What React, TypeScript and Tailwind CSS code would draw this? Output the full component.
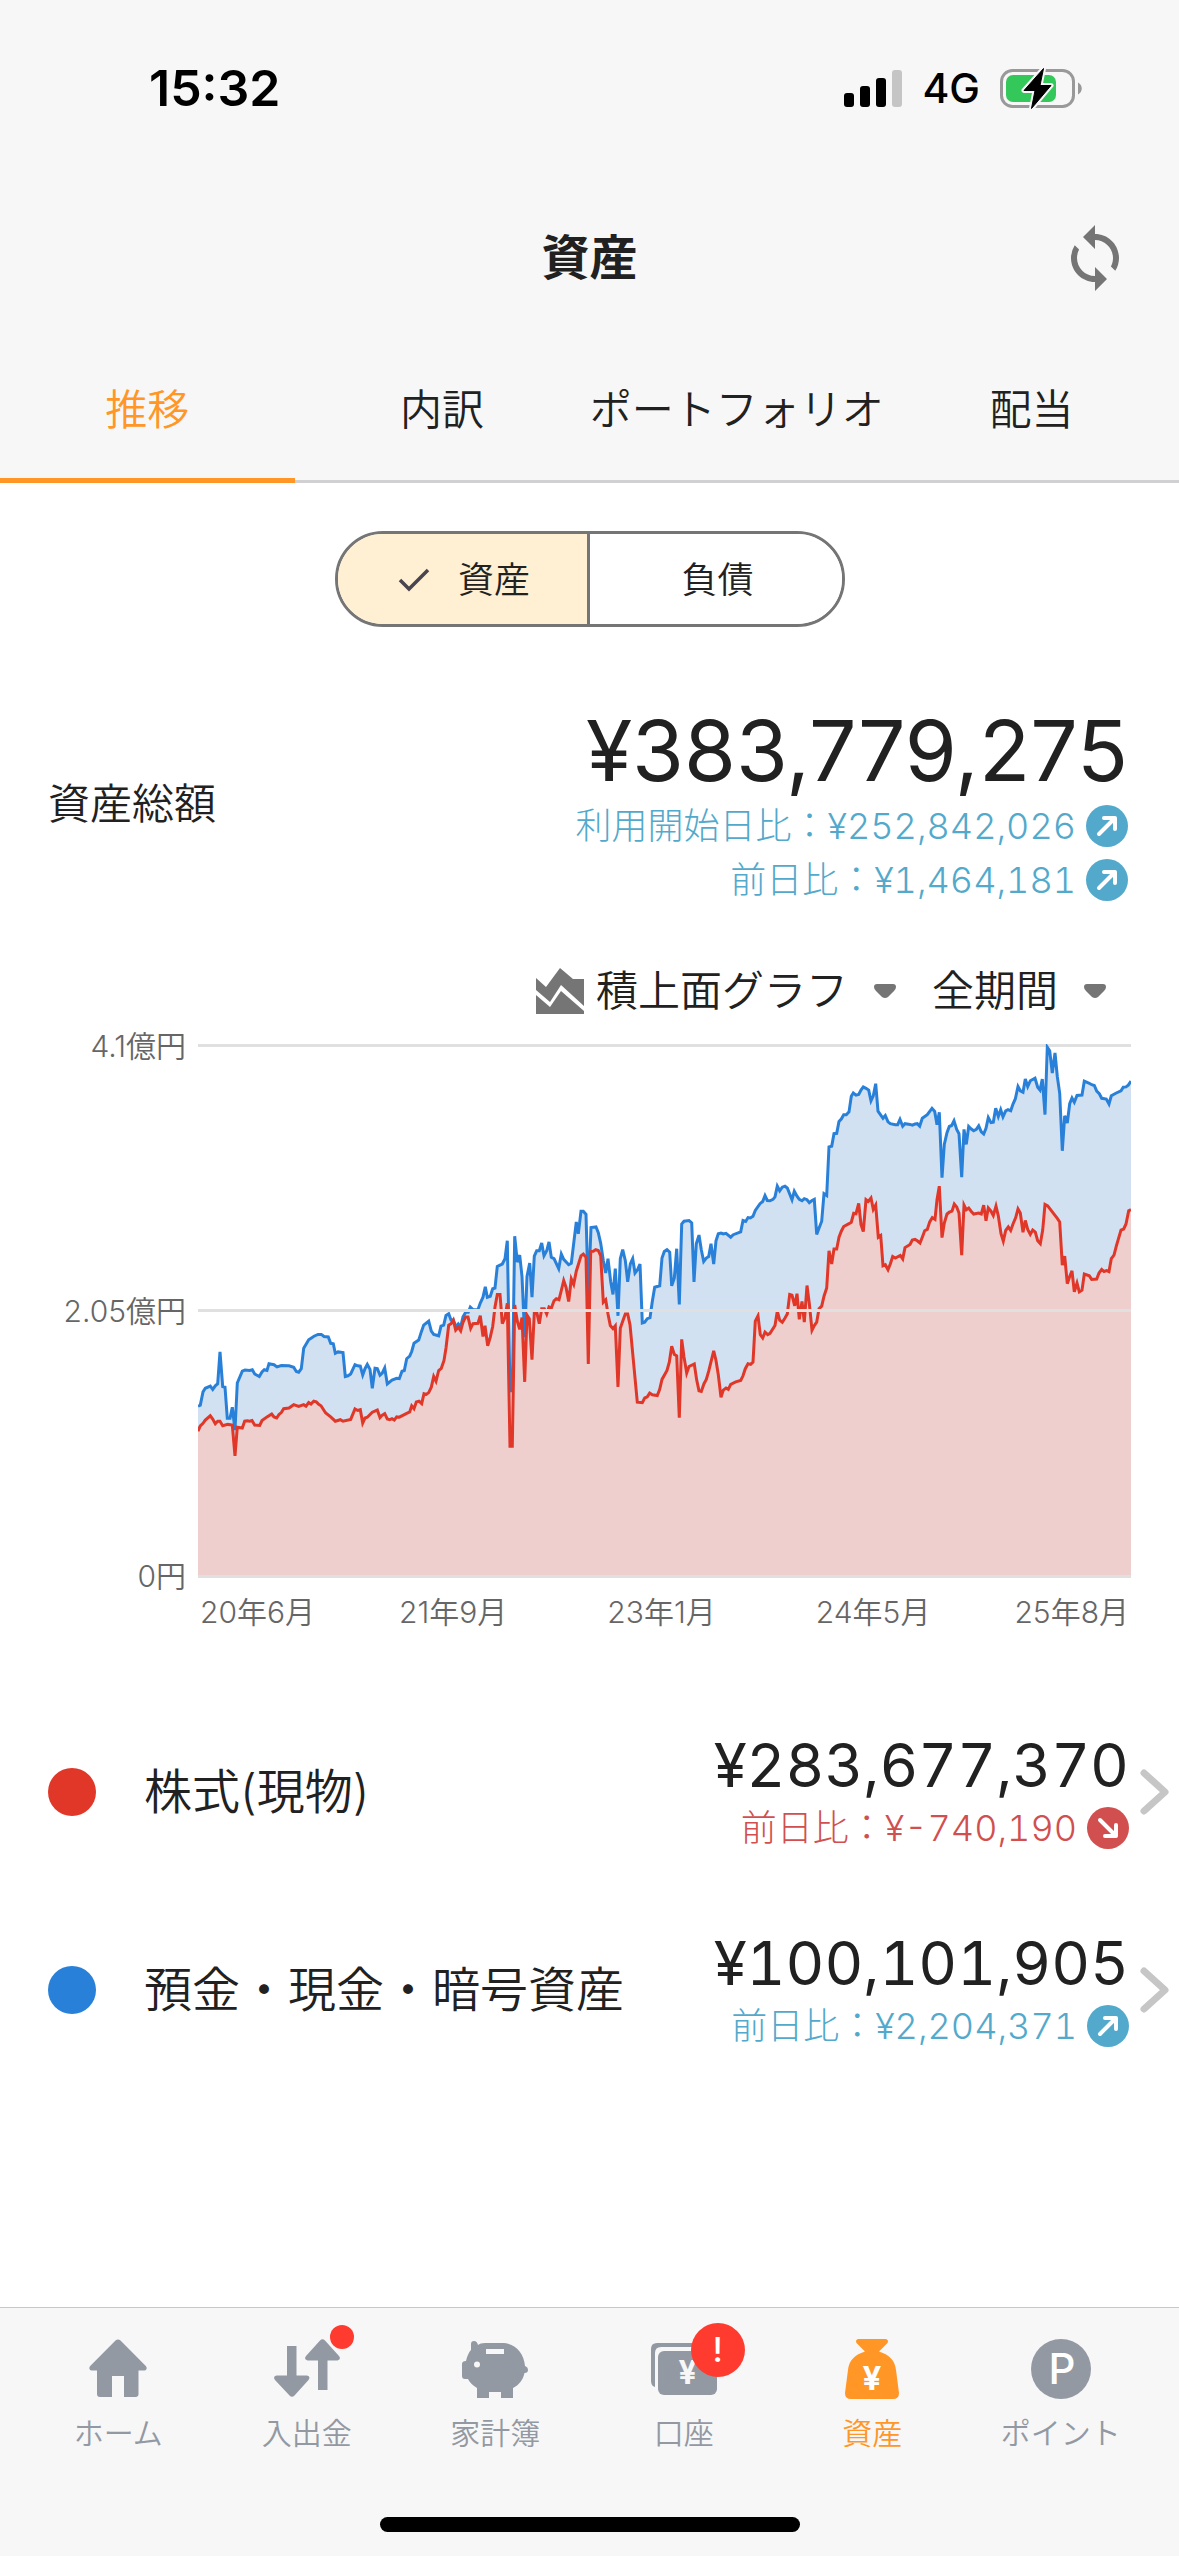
import { useState, type ReactNode } from "react";
import { MdSync } from "react-icons/md";

/* ---------- chart data ---------- */

type Segment = { offset: number; points: string };

const CHART_WIDTH = 933;
const CHART_HEIGHT = 534;
const BASELINE = 532;

const totalSeries: Segment[] = [
  {
    offset: -54,
    points:
      "54,1053 61,1050 69,1013 76,1003 91,997 98,1006 106,996 113,990 120,901 128,998 135,1000 142,1087 150,1087 157,1056 165,1120 172,988 187,955 195,952 209,953 217,951 224,963 238,970 246,957 253,951 261,953 267,934 282,937 291,943 304,939 327,940 341,944 349,956 356,958 364,948 371,891 386,867 402,857 414,852 424,852 432,858 445,859 452,877 460,878 466,905 474,901 489,903 496,970 504,968 512,963 525,937 533,940 541,941 548,966 555,948 562,936 570,950 577,1003 585,947 592,948 600,966 607,960 614,946 622,991 636,980 650,975 658,976 666,955 673,953 680,920 689,913 695,900 702,877 716,868 724,845 731,826 746,815 754,843 761,852 776,856 783,829 791,826 798,799 806,794 813,812 820,812 828,831 835,823 842,831 849,803 857,790 865,790 871,776 879,783 894,782 901,764 909,748 916,719 922,748 931,745 938,724 945,722 952,662 960,658",
  },
  {
    offset: 846,
    points:
      "67,655 75,640 82,590 90,1010 97,1010 104,577 112,650 119,630 126,690 134,860 141,690 149,652 156,748 163,633 170,618 178,618 185,596 192,632 200,618 207,593 214,636 222,640 236,668 244,627 251,642 266,657 274,653 289,537 295,570 303,507 310,507 318,516 325,745 333,553 348,551 355,567 362,597 370,645 377,680 384,640 392,705 399,740 406,668 414,800 421,640 428,615 436,645 443,705 451,655 458,640 465,680 473,670 480,655 487,820 494,818 502,808 510,805 517,760 524,720 539,716 546,638 553,620 561,615 569,622 575,716 583,695 590,612 598,768 605,543 612,535 627,533 635,540 642,705 649,598 657,574 664,615 671,648 679,638 686,634 693,598 701,655 708,590 715,570 723,568 730,571 738,569 752,580 760,573 782,565 789,533 797,536 804,525 811,526 819,521 826,505 840,486 848,480 855,463 862,477 870,478 879,474 885,467 892,437 899,450 907,440 915,437 922,442 936,475 943,451 951,465 958,474 966,478 973,472 981,475 988,483 996,477 1003,474 1010,572",
  },
  {
    offset: 1806,
    points:
      "57,555 65,535 72,458 80,463 87,327 95,325 102,290 110,289 117,256 124,249 131,237 139,237 147,229 154,185 160,176 168,182 176,180 183,168 190,159 198,163 206,168 213,198 220,184 227,150 234,227 249,247 256,239 264,257 271,262 286,265 293,265 300,250 308,269 315,262 330,264 337,266 345,263 352,262 359,269 367,247 382,237 396,219 404,228 411,265 418,230 426,413 433,320 441,287 448,270 455,267 462,254 470,278 477,290 485,412 492,278 499,320 506,270 514,277 521,282 529,278 536,268 544,285 551,291 558,275 565,245 573,259 580,258 587,219 595,242 602,223 609,243 617,226 624,223 632,226 639,207 646,193 654,158 661,170 669,174 676,137 683,158 691,142 705,135 713,160 720,168 727,137 735,237 742,48 749,58 757,120 765,64 772,130 779,177 787,338 794,240 802,260 809,206 816,190 823,202 831,183 846,182 853,143 868,149 875,153 883,155 890,171 898,178 905,191 919,193 927,207 934,184 949,176 963,170 970,160 978,159 985,154 993,143",
  },
];

const stockSeries: Segment[] = [
  {
    offset: -54,
    points:
      "54,1123 61,1108 69,1101 76,1092 91,1080 98,1089 106,1102 113,1095 120,1095 128,1108 143,1104 157,1106 165,1192 172,1112 187,1114 194,1095 202,1094 209,1095 216,1093 224,1106 239,1107 246,1093 261,1083 275,1075 282,1083 290,1086 297,1076 304,1071 311,1060 327,1058 341,1049 356,1054 371,1049 378,1053 386,1043 393,1047 401,1039 409,1041 416,1048 423,1052 437,1072 452,1083 466,1095 481,1091 489,1095 512,1090 525,1061 533,1065 541,1063 548,1100 555,1086 562,1084 577,1070 592,1064 600,1085 607,1078 614,1074 622,1089 629,1091 636,1088 643,1092 650,1083 658,1084 680,1073 689,1069 695,1052 702,1060 709,1041 717,1039 725,1046 732,1018 739,1020 746,1015 754,1000 761,970 768,983 776,953 784,947 792,925 798,890 806,826 813,822 820,812 827,840 835,832 842,842 849,818 857,803 864,803 872,835 879,822 894,821 901,800 909,858 915,828 923,884 931,860 938,830 945,775 952,740 958,740",
  },
  {
    offset: 846,
    points:
      "60,740 67,822 75,805 82,765 90,1165 97,1165 104,770 112,815 119,838 126,805 134,985 141,798 148,808 156,923 163,792 170,790 178,822 185,780 193,780 200,795 207,775 214,779 222,758 229,752 237,755 244,729 251,701 258,720 266,760 274,697 281,712 289,675 303,632 310,627 318,636 325,935 332,620 340,619 347,615 355,617 362,632 370,762 377,755 384,795 391,827 399,836 406,828 414,999 421,835 428,815 436,795 443,795 450,825 472,1042 487,1043 494,1030 502,1027 509,1016 517,1021 532,1023 539,1006 546,978 561,953 568,930 575,885 583,908 590,912 598,1085 605,866 612,915 620,960 627,942 643,935 650,980 657,1010 664,1012 672,990 679,978 686,955 701,898 708,925 715,965 723,1028 730,1008 738,1002 745,1006 752,992 767,985 782,981 789,968 796,948 804,934 812,936 819,930 826,815 834,800 841,853 848,862 855,846 863,853 870,849 885,827 892,787 899,812 907,818 915,806 922,795 929,740 936,742 944,772 951,738 958,810 966,760 973,818 981,715 988,765 996,840 1003,827 1010,818",
  },
  {
    offset: 1806,
    points:
      "57,780 65,773 72,745 80,722 87,618 95,655 102,613 110,613 117,580 124,563 131,550 147,542 154,538 161,513 168,514 176,485 183,545 190,564 198,475 205,480 213,470 220,502 227,490 235,580 242,575 249,660 256,657 264,671 271,655 278,634 286,638 301,631 308,641 315,609 330,600 337,588 345,586 352,590 360,596 367,580 374,562 382,558 389,537 397,525 405,530 411,475 418,437 426,581 433,540 441,515 448,510 456,507 463,487 470,495 477,512 485,630 492,490 499,503 506,498 514,508 521,515 536,512 544,515 551,490 558,534 565,498 573,507 580,519 588,493 595,520 603,570 610,591 617,561 625,551 632,561 639,543 647,525 654,501 661,512 669,566 676,533 683,558 691,572 698,560 706,566 713,590 721,598 728,560 735,488 743,492 757,509 772,527 779,537 787,658 794,633 802,710 809,690 816,674 823,733 831,708 838,733 846,728 853,683 868,688 875,698 890,697 897,680 905,670 912,676 920,673 927,676 934,640 942,630 949,605 963,560 971,557 978,543 986,506 993,503",
  },
];

function toPoints(series: Segment[]): string {
  return series
    .flatMap(({ offset, points }) =>
      points.split(" ").map((pair) => {
        const [x, y] = pair.split(",").map(Number);
        return `${((x + offset) / 3).toFixed(1)},${(y / 2.8 - 13.9).toFixed(1)}`;
      }),
    )
    .join(" ");
}

function AssetChart() {
  const total = toPoints(totalSeries);
  const stock = toPoints(stockSeries);
  const close = ` ${CHART_WIDTH},${BASELINE} 0,${BASELINE}`;
  return (
    <svg
      viewBox={`0 0 ${CHART_WIDTH} ${CHART_HEIGHT}`}
      className="block w-full"
      role="img"
      aria-label="資産推移グラフ"
    >
      <rect x="0" y="0" width={CHART_WIDTH} height="3" fill="#e0e0e0" />
      <polygon points={total + close} fill="#d2e1f2" />
      <polyline points={total} fill="none" stroke="#2980d9" strokeWidth="3" />
      <polygon points={stock + close} fill="#efcfce" />
      <polyline points={stock} fill="none" stroke="#e03728" strokeWidth="3" />
      <rect x="0" y="265" width={CHART_WIDTH} height="3" fill="#e0e0e0" />
      <rect x="0" y="531" width={CHART_WIDTH} height="3" fill="#e0e0e0" />
    </svg>
  );
}

/* ---------- status bar ---------- */

function SignalIcon() {
  return (
    <svg viewBox="0 0 58 38" className="h-[38px] w-[58px]" aria-hidden="true">
      <rect x="0" y="24" width="10" height="14" rx="3" />
      <rect x="16" y="17" width="10" height="21" rx="3" />
      <rect x="32" y="9" width="10" height="29" rx="3" />
      <rect x="48" y="1" width="10" height="37" rx="3" fill="#c5c5c5" />
    </svg>
  );
}

function BatteryIcon() {
  const bolt = "M43.5 0.5 L24 22.5 H35 L31.5 40.5 L51 17.5 H40 Z";
  return (
    <svg viewBox="0 0 82 41" className="h-[41px] w-[82px]" aria-hidden="true">
      <rect x="1.5" y="2.5" width="72" height="36" rx="11" fill="none" stroke="#999" strokeWidth="3" />
      <path d="M78 14.5 C83 17 83 24 78 26.5 Z" fill="#999" />
      <rect x="6" y="7" width="50" height="27" rx="7" fill="#34c759" />
      <path d={bolt} fill="#f7f7f7" stroke="#f7f7f7" strokeWidth="5" strokeLinejoin="round" />
      <path d={bolt} fill="#000" strokeLinejoin="round" stroke="#000" strokeWidth="1" />
    </svg>
  );
}

/* ---------- small icons ---------- */

function TrendIcon({ up }: { up: boolean }) {
  return (
    <svg viewBox="0 0 42 42" className="size-[42px] shrink-0" aria-hidden="true">
      <circle cx="21" cy="21" r="21" fill={up ? "#52a9cb" : "#d14f4e"} />
      <path
        d={up ? "M13 29 L28 14 M18 13 H29 V24" : "M13 13 L28 28 M29 18 V29 H18"}
        fill="none"
        stroke="#fff"
        strokeWidth="4"
        strokeLinecap="round"
        strokeLinejoin="round"
      />
    </svg>
  );
}

function CaretIcon() {
  return (
    <svg
      viewBox="0 0 22 14"
      className="pointer-events-none absolute right-0 top-1/2 h-[14px] w-[22px] -translate-y-1/2"
      aria-hidden="true"
    >
      <path d="M3 0 H19 Q22 0 22 3 Q22 5 20 7 L14 13 Q11 15 8 13 L2 7 Q0 5 0 3 Q0 0 3 0 Z" fill="#757575" />
    </svg>
  );
}

function AreaChartIcon() {
  return (
    <svg viewBox="0 0 48 46" className="h-[46px] w-[48px]" aria-hidden="true" fill="#757575">
      <path d="M0 10 L10 19 L24 0 L37 11 H48 V38 L25 17 L14 34 L0 22 Z" />
      <path d="M0 27 L14 39 L25 23 L48 43 V46 H0 Z" />
    </svg>
  );
}

function ChevronIcon() {
  return (
    <svg viewBox="0 0 32 48" className="h-12 w-8 shrink-0" aria-hidden="true">
      <path d="M5 5 L26 24 L5 43" fill="none" stroke="#c6c6c6" strokeWidth="7" strokeLinecap="round" strokeLinejoin="round" />
    </svg>
  );
}

/* ---------- navigation icons ---------- */

function HomeIcon() {
  return (
    <svg viewBox="0 0 60 60" className="size-[60px]" aria-hidden="true" fill="currentColor">
      <path d="M27.5 1.6 Q30 -0.5 32.5 1.6 L57.8 27 Q59 28.5 58.5 30 Q58 31.5 56 31.5 H50.5 V55 Q50.5 58 47.5 58 H36 V37 H24 V58 H12 Q9 58 9 55 V31.5 H4 Q2 31.5 1.5 30 Q1 28.5 2.2 27 Z" />
    </svg>
  );
}

function TransferIcon() {
  return (
    <svg viewBox="0 0 66 60" className="h-[60px] w-[66px]" aria-hidden="true" fill="currentColor">
      <path d="M13 7 H22.5 V36.5 H33 Q37 37.5 34.5 41 L20.5 56.5 Q18 59 15.5 56.5 L1 41 Q-1.5 37.5 2.5 36.5 H13 Z" />
      <path d="M44 51 V21.5 H33.5 Q29.5 20.5 32 17 L46 1.5 Q48.5 -1 51 1.5 L65 17 Q67.5 20.5 63.5 21.5 H53.5 V51 Z" />
    </svg>
  );
}

function PigIcon() {
  return (
    <svg viewBox="0 0 68 60" className="h-[60px] w-[68px]" aria-hidden="true">
      <path
        d="M10 11 V5 Q10 2 13 2 Q16 2 17 6 Q19 4 24 4 H41 C54 4 63 14 64 27 Q67 28 67 31 Q67 34 63.5 34 C62 41 58 46 52 49 V59 H40 V53 H28 V59 H16 V49 C11 46 8.5 43 7 40 H4 Q1 40 1 37 V25 Q1 22 5 22 C6 17 8 13 10 11 Z"
        fill="currentColor"
      />
      <rect x="25" y="10" width="18" height="5" fill="#f7f7f7" />
      <circle cx="16" cy="25.5" r="3" fill="#f7f7f7" />
    </svg>
  );
}

function WalletIcon() {
  return (
    <svg viewBox="0 0 66 60" className="h-[60px] w-[66px]" aria-hidden="true">
      <path d="M4 48 Q0 47 0 42 V10 Q0 4 6 4 H52 Q57 4 58 8 H10 Q4 8 4 14 Z" fill="currentColor" />
      <rect x="7" y="12" width="59" height="44" rx="6" fill="currentColor" />
      <text x="36.5" y="45" textAnchor="middle" fontSize="32" fontWeight="700" fill="#f7f7f7" fontFamily="Inter, sans-serif">¥</text>
    </svg>
  );
}

function BagIcon() {
  return (
    <svg viewBox="0 0 54 60" className="h-[60px] w-[54px]" aria-hidden="true">
      <path
        d="M13 0 H41 Q44 1 42.5 4 L34 12.5 C45 16 50 22 51 31 L54 54 Q54 60 48 60 H6 Q0 60 0 54 L3 31 C4 22 9 16 20 12.5 L11.5 4 Q10 1 13 0 Z"
        fill="currentColor"
      />
      <text x="27" y="51" textAnchor="middle" fontSize="33" fontWeight="700" fill="#fff" fontFamily="Inter, sans-serif">¥</text>
    </svg>
  );
}

function PointIcon() {
  return (
    <svg viewBox="0 0 60 60" className="size-[60px]" aria-hidden="true">
      <circle cx="30" cy="30" r="30" fill="currentColor" />
      <text x="31" y="45" textAnchor="middle" fontSize="42" fontWeight="500" fill="#fff" fontFamily="Inter, sans-serif">P</text>
    </svg>
  );
}

/* ---------- building blocks ---------- */

function Change({ label, value, up = true }: { label: string; value: string; up?: boolean }) {
  return (
    <p
      className={`flex items-center justify-end gap-2.5 whitespace-nowrap text-[36px] leading-[54px] ${
        up ? "text-[#52a9cb]" : "text-[#d14f4e]"
      }`}
    >
      <span className="font-light tabular-nums">
        {label}：<span className="font-[350]">{value}</span>
      </span>
      <TrendIcon up={up} />
    </p>
  );
}

function Picker({ label, options }: { label: string; options: string[] }) {
  return (
    <div className="relative">
      <select
        aria-label={label}
        className="block appearance-none bg-transparent pr-12 text-[42px] leading-[60px] font-[350] [field-sizing:content]"
      >
        {options.map((option) => (
          <option key={option}>{option}</option>
        ))}
      </select>
      <CaretIcon />
    </div>
  );
}

type Category = { name: string; dot: string; value: string; change: string; up: boolean };

const categories: Category[] = [
  { name: "株式(現物)", dot: "bg-[#e03728]", value: "¥283,677,370", change: "¥-740,190", up: false },
  { name: "預金・現金・暗号資産", dot: "bg-[#2980d9]", value: "¥100,101,905", change: "¥2,204,371", up: true },
];

function CategoryRow({ name, dot, value, change, up }: Category) {
  return (
    <li>
      <a href="#detail" className="flex h-[198px] items-center pl-12 pr-2">
        <span className={`size-12 shrink-0 rounded-full ${dot}`} />
        <span className="ml-12 flex-1 whitespace-nowrap text-[48px] leading-[64px] font-[350]">{name}</span>
        <span className="mr-2.5 block">
          <span className="block text-right text-[60px] leading-[72px] tabular-nums">{value}</span>
          <Change label="前日比" value={change} up={up} />
        </span>
        <ChevronIcon />
      </a>
    </li>
  );
}

const tabs = ["推移", "内訳", "ポートフォリオ", "配当"];

type NavItem = { label: string; icon: ReactNode; badge?: ReactNode };

const navItems: NavItem[] = [
  { label: "ホーム", icon: <HomeIcon /> },
  {
    label: "入出金",
    icon: <TransferIcon />,
    badge: <span className="absolute -right-3.5 -top-3.5 size-6 rounded-full bg-[#ff3b30]" />,
  },
  { label: "家計簿", icon: <PigIcon /> },
  {
    label: "口座",
    icon: <WalletIcon />,
    badge: (
      <span className="absolute -right-7 -top-4 flex size-[54px] items-center justify-center rounded-full bg-[#ff3b30] text-[34px] leading-none font-medium text-white">
        !
      </span>
    ),
  },
  { label: "資産", icon: <BagIcon /> },
  { label: "ポイント", icon: <PointIcon /> },
];

export default function App() {
  const [tab, setTab] = useState("推移");
  const [kind, setKind] = useState("資産");

  return (
    <div className="flex min-h-screen flex-col bg-white font-['Inter','Noto_Sans_CJK_JP',sans-serif] text-[#212121]">
      <header className="border-b-3 border-[#d0d0d3] bg-[#f7f7f7]">
        <div className="flex h-44 items-center justify-between pl-[149px] pr-[97px] text-black">
          <time className="text-[50px] leading-[60px] font-semibold">15:32</time>
          <div className="flex items-center gap-5">
            <SignalIcon />
            <span className="text-[41px] leading-[50px] font-medium">4G</span>
            <BatteryIcon />
          </div>
        </div>
        <div className="grid h-[164px] grid-cols-[1fr_auto_1fr] items-center px-12">
          <h1 className="col-start-2 text-[48px] leading-[60px] font-bold">資産</h1>
          <button type="button" aria-label="更新" className="justify-self-end text-[#757575]">
            <MdSync className="size-[72px]" />
          </button>
        </div>
        <nav className="-mb-[3px] grid grid-cols-4">
          {tabs.map((name) => (
            <button
              key={name}
              type="button"
              onClick={() => setTab(name)}
              aria-current={tab === name ? "page" : undefined}
              className={`h-[143px] border-b-5 whitespace-nowrap text-[42px] font-[350] ${
                tab === name ? "border-[#ff9626] text-[#ff9626]" : "border-transparent"
              }`}
            >
              {name}
            </button>
          ))}
        </nav>
      </header>

      <main className="flex-1">
        <div className="flex justify-center pt-12">
          <div className="grid h-24 w-[510px] grid-cols-2 rounded-full border-3 border-[#757575]">
            {["資産", "負債"].map((name) => (
              <button
                key={name}
                type="button"
                aria-pressed={kind === name}
                onClick={() => setKind(name)}
                className={`flex items-center justify-center gap-7 border-[#757575] pl-1 pt-0.5 text-[36px] leading-[50px] font-[350] first:rounded-l-full first:border-r-3 last:rounded-r-full ${
                  kind === name ? "bg-[#ffefd3]" : "bg-white"
                }`}
              >
                {kind === name && (
                  <svg viewBox="0 0 32 24" className="h-6 w-8" aria-hidden="true">
                    <path d="M2 12 L11 21 L30 2" fill="none" stroke="#49454f" strokeWidth="3.5" />
                  </svg>
                )}
                {name}
              </button>
            ))}
          </div>
        </div>

        <section className="flex items-center justify-between pl-12 pr-[51px] pt-[74px]">
          <h2 className="text-[42px] leading-[60px] font-[350]">資産総額</h2>
          <div className="text-right">
            <p className="-mb-0.5 text-[84px] leading-[100px]">¥383,779,275</p>
            <Change label="利用開始日比" value="¥252,842,026" />
            <Change label="前日比" value="¥1,464,181" />
          </div>
        </section>

        <div className="flex items-center justify-end gap-9 pr-[73px] pt-[54px]">
          <div className="flex items-center gap-3">
            <AreaChartIcon />
            <Picker label="グラフの種類" options={["積上面グラフ"]} />
          </div>
          <Picker label="期間" options={["全期間"]} />
        </div>

        <section className="grid grid-cols-[186px_1fr] pr-12 pt-[23px] text-[30px] leading-[36px] font-[350] text-[#666]">
          <div className="-my-4 flex flex-col justify-between text-right">
            <span>4.1億円</span>
            <span>2.05億円</span>
            <span>0円</span>
          </div>
          <div className="pl-3">
            <AssetChart />
          </div>
          <div className="col-start-2 flex pl-3.5 pr-0.5 pt-4">
            <span>20年6月</span>
            <div className="flex flex-1 justify-between px-[84px]">
              <span>21年9月</span>
              <span>23年1月</span>
              <span>24年5月</span>
            </div>
            <span>25年8月</span>
          </div>
        </section>

        <ul className="pt-[63px]">
          {categories.map((category) => (
            <CategoryRow key={category.name} {...category} />
          ))}
        </ul>
      </main>

      <footer className="border-t border-[#c8c8cc] bg-[#f7f7f7]">
        <nav className="grid grid-cols-6 px-6 pt-[31px]">
          {navItems.map(({ label, icon, badge }) => (
            <a
              key={label}
              href="#nav"
              aria-current={label === "資産" ? "page" : undefined}
              className={`flex flex-col items-center gap-4 ${label === "資産" ? "text-[#ff9626]" : "text-[#9399a3]"}`}
            >
              <span className="relative">
                {icon}
                {badge}
              </span>
              <span className="text-[30px] leading-[36px] font-[350]">{label}</span>
            </a>
          ))}
        </nav>
        <div className="mx-auto mb-6 mt-[66px] h-[15px] w-[420px] rounded-full bg-black" />
      </footer>
    </div>
  );
}
